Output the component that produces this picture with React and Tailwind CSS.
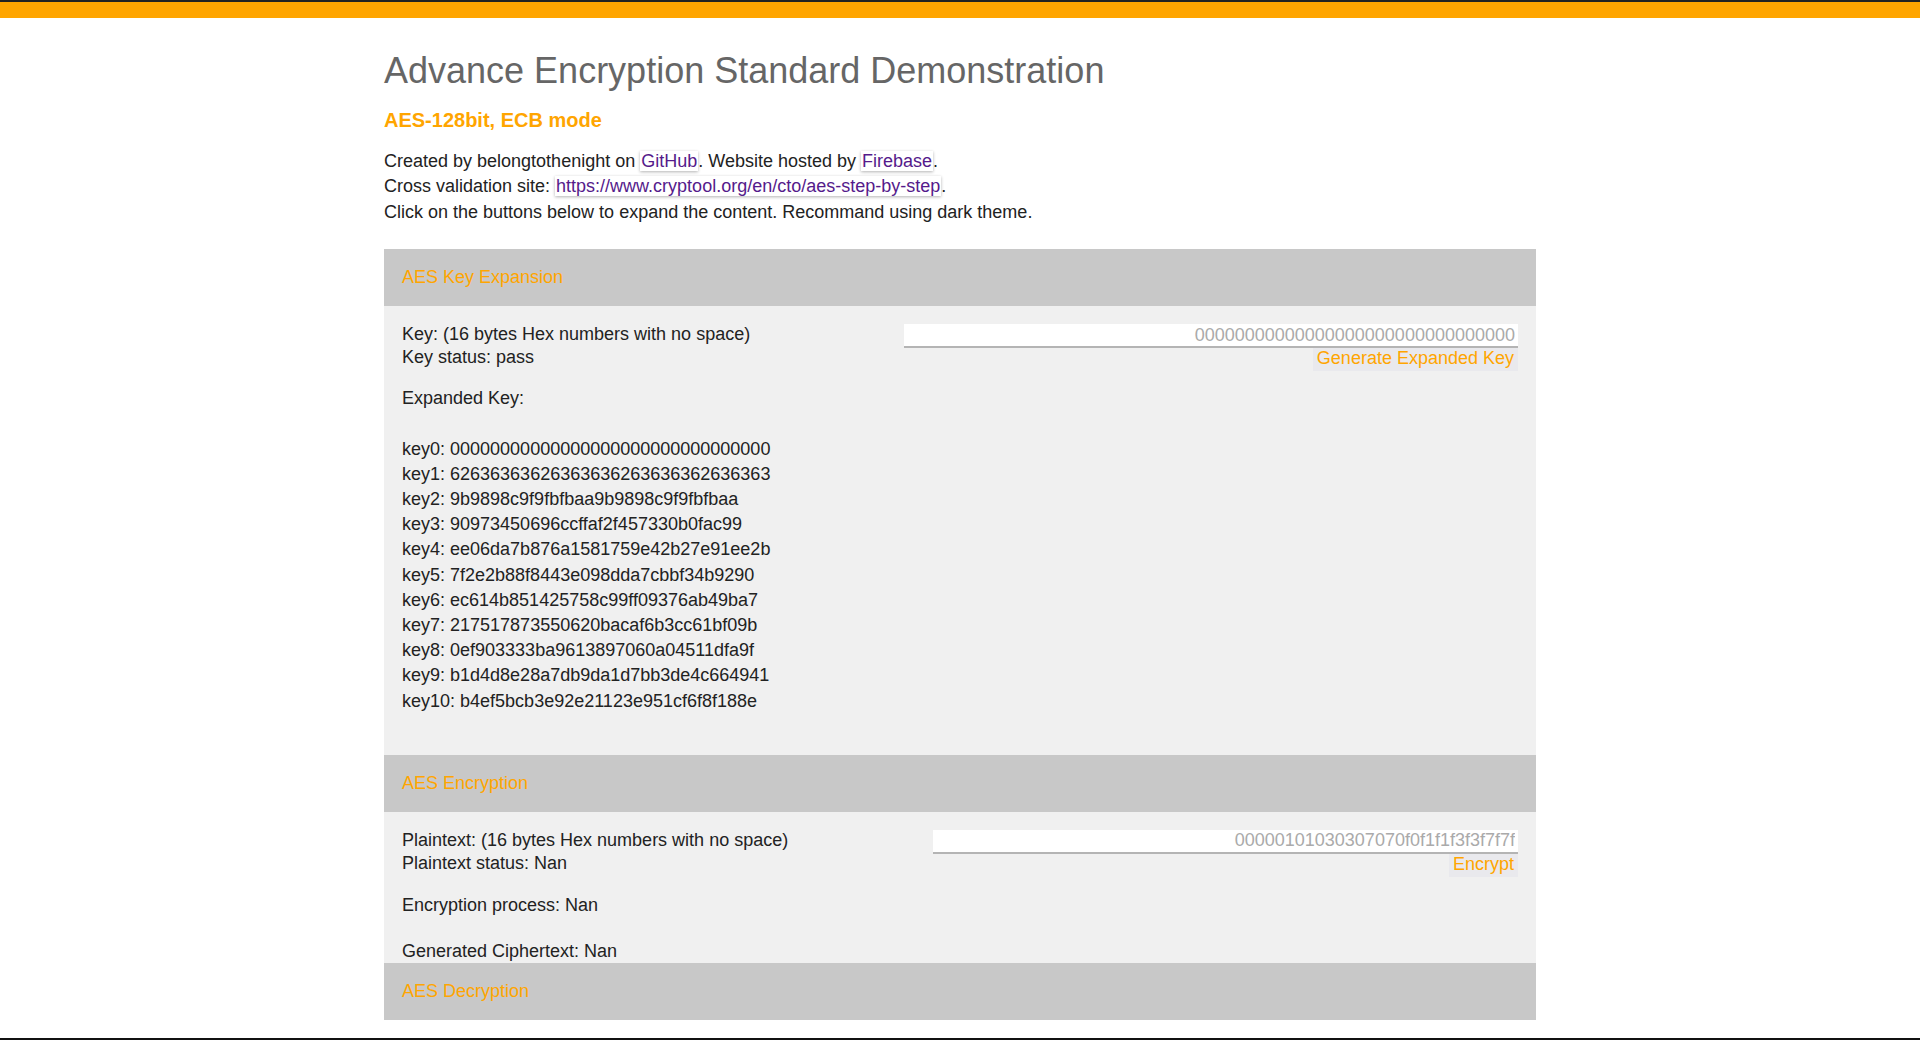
const expandedKeys = [
  '00000000000000000000000000000000',
  '62636363626363636263636362636363',
  '9b9898c9f9fbfbaa9b9898c9f9fbfbaa',
  '90973450696ccffaf2f457330b0fac99',
  'ee06da7b876a1581759e42b27e91ee2b',
  '7f2e2b88f8443e098dda7cbbf34b9290',
  'ec614b851425758c99ff09376ab49ba7',
  '217517873550620bacaf6b3cc61bf09b',
  '0ef903333ba9613897060a04511dfa9f',
  'b1d4d8e28a7db9da1d7bb3de4c664941',
  'b4ef5bcb3e92e21123e951cf6f8f188e',
]

function Link({ children }) {
  return (
    <a
      href="#"
      className="bg-white px-px text-[#551a8b] shadow-[0_1px_3px_rgba(0,0,0,0.3)]"
    >
      {children}
    </a>
  )
}

function PanelHeader({ title }) {
  return (
    <div className="bg-[#c8c8c8] px-[18px] py-[18px] text-[18px] leading-[21px] text-[#ffa500]">
      {title}
    </div>
  )
}

function InputRow({ label, status, placeholder, inputWidth, buttonText }) {
  return (
    <div className="flex items-start justify-between">
      <div className="-mt-px leading-[23px]">
        <div>{label}</div>
        <div>{status}</div>
      </div>
      <div className="flex flex-col items-end">
        <input
          type="text"
          placeholder={placeholder}
          className={`h-[24px] ${inputWidth} border-b-2 border-[#b4b4b4] bg-white pr-[3px] text-right text-[18px] text-[#222] outline-none placeholder:text-[#aaaaaa]`}
        />
        <button
          type="button"
          className="h-[23px] bg-[#e9e9ed] px-[4px] pb-[3px] text-[18px] leading-[20px] text-[#ffa500]"
        >
          {buttonText}
        </button>
      </div>
    </div>
  )
}

export default function App() {
  return (
    <div className="min-h-screen bg-white font-['Liberation_Sans',Arial,sans-serif] text-[18px] text-[#222]">
      <div className="h-[2px] bg-[#222]" />
      <div className="h-[16px] bg-[#ffa500]" />

      <main className="mx-auto w-[1152px] pb-[40px]">
        <h1 className="mt-[28px] text-[36px] leading-[50px] text-[#666]">
          Advance Encryption Standard Demonstration
        </h1>
        <h2 className="mt-[10px] text-[20px] font-bold leading-[28px] text-[#ffa500]">
          AES-128bit, ECB mode
        </h2>
        <div className="mt-[15px] leading-[25.4px]">
          <div>
            Created by belongtothenight on <Link>GitHub</Link>. Website hosted by{' '}
            <Link>Firebase</Link>.
          </div>
          <div>
            Cross validation site: <Link>https://www.cryptool.org/en/cto/aes-step-by-step</Link>.
          </div>
          <div>Click on the buttons below to expand the content. Recommand using dark theme.</div>
        </div>

        <section className="mt-[24px]">
          <PanelHeader title="AES Key Expansion" />
          <div className="bg-[#f0f0f0] px-[18px] pb-[41px] pt-[18px]">
            <InputRow
              label="Key: (16 bytes Hex numbers with no space)"
              status="Key status: pass"
              placeholder="00000000000000000000000000000000"
              inputWidth="w-[614px]"
              buttonText="Generate Expanded Key"
            />
            <div className="mt-[15px] leading-[25.2px]">
              <div>Expanded Key:</div>
              <br />
              {expandedKeys.map((key, i) => (
                <div key={i}>
                  key{i}: {key}
                </div>
              ))}
            </div>
          </div>

          <PanelHeader title="AES Encryption" />
          <div className="h-[151px] overflow-hidden bg-[#f0f0f0] px-[18px] pt-[18px]">
            <InputRow
              label="Plaintext: (16 bytes Hex numbers with no space)"
              status="Plaintext status: Nan"
              placeholder="00000101030307070f0f1f1f3f3f7f7f"
              inputWidth="w-[585px]"
              buttonText="Encrypt"
            />
            <div className="mt-[16px] leading-[25.2px]">Encryption process: Nan</div>
            <div className="mt-[21px] leading-[25.2px]">Generated Ciphertext: Nan</div>
          </div>

          <PanelHeader title="AES Decryption" />
        </section>
      </main>

      <div className="fixed bottom-0 left-0 right-0 h-[2px] bg-[#111]" />
    </div>
  )
}
